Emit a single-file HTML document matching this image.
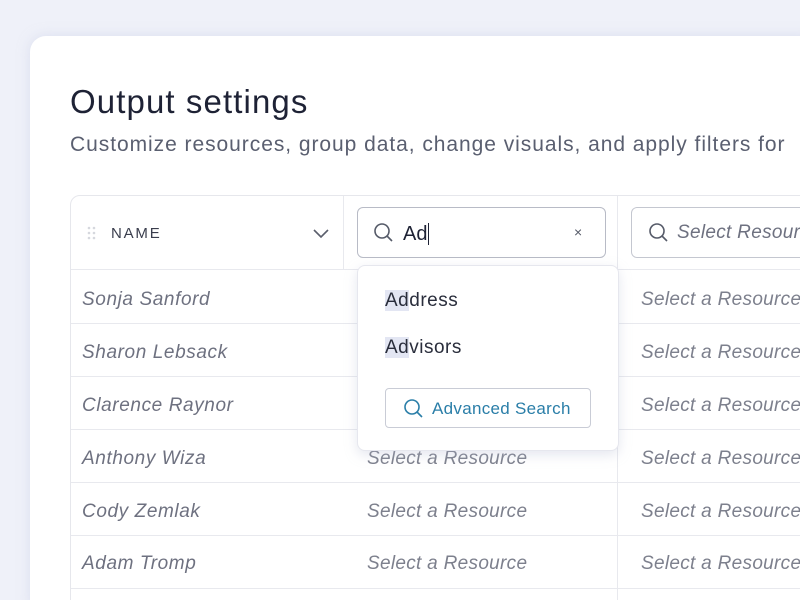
<!DOCTYPE html>
<html><head><meta charset="utf-8"><style>
*{margin:0;padding:0;box-sizing:border-box}
html,body{width:800px;height:600px;overflow:hidden}
body{background:#eff1f9;font-family:"Liberation Sans",sans-serif;position:relative}
.card{position:absolute;left:30px;top:36px;width:790px;height:580px;background:#fff;border-radius:16px;box-shadow:0 0 12px rgba(200,205,230,.5)}
.abs{position:absolute}
h1{position:absolute;left:70px;top:83px;font-size:33px;font-weight:400;color:#1e2235;letter-spacing:1.1px}
.sub{position:absolute;left:70px;top:133px;font-size:21px;color:#5a5f70;white-space:nowrap;letter-spacing:.95px}
.tbl{position:absolute;left:70px;top:195px;width:740px;height:420px;border:1px solid #e6e7ec;border-radius:10px 0 0 0}
.hl{position:absolute;height:1px;background:#e8e9ee}
.vl{position:absolute;width:1px;background:#e8e9ee}
.name{position:absolute;left:82px;font-size:19px;font-style:italic;color:#6e7180;letter-spacing:.6px}
.sel{position:absolute;font-size:19px;font-style:italic;color:#7d808d;white-space:nowrap;letter-spacing:.3px}
</style></head><body>
<div class="card"></div>
<h1>Output settings</h1>
<div class="sub">Customize resources, group data, change visuals, and apply filters for</div>
<div class="tbl"></div>
<div class="vl" style="left:343px;top:196px;height:73px"></div>
<div class="vl" style="left:617px;top:196px;height:410px"></div>
<div class="hl" style="left:71px;top:269px;width:729px"></div>
<div class="hl" style="left:71px;top:323px;width:729px"></div>
<div class="hl" style="left:71px;top:376px;width:729px"></div>
<div class="hl" style="left:71px;top:429px;width:729px"></div>
<div class="hl" style="left:71px;top:482px;width:729px"></div>
<div class="hl" style="left:71px;top:535px;width:729px"></div>
<div class="hl" style="left:71px;top:588px;width:729px"></div>
<svg class="abs" style="left:87px;top:226px" width="10" height="14"><g fill="#d6d8de"><circle cx="2" cy="2" r="1.3"/><circle cx="7" cy="2" r="1.3"/><circle cx="2" cy="7" r="1.3"/><circle cx="7" cy="7" r="1.3"/><circle cx="2" cy="12" r="1.3"/><circle cx="7" cy="12" r="1.3"/></g></svg>
<div class="abs" style="left:111px;top:225px;font-size:15px;letter-spacing:1.8px;color:#3a3e4d">NAME</div>
<svg class="abs" style="left:312px;top:227px" width="18" height="12"><path d="M2 3l7 7 7-7" fill="none" stroke="#5a5e6c" stroke-width="1.6"/></svg>
<div class="abs" style="left:357px;top:207px;width:249px;height:51px;border:1.5px solid #b8bbc6;border-radius:6px"></div>
<svg class="abs" style="left:373px;top:222px" width="22" height="22"><circle cx="9" cy="9" r="7" fill="none" stroke="#555a68" stroke-width="1.6"/><path d="M14 14l5 5" stroke="#555a68" stroke-width="1.6"/></svg>
<div class="abs" style="left:403px;top:223px;font-size:20px;color:#1e2235">Ad<span style="border-left:1.5px solid #1e2235;margin-left:1px"></span></div>
<div class="abs" style="left:574px;top:224px;font-size:14px;color:#555a68">×</div>
<div class="abs" style="left:631px;top:207px;width:200px;height:51px;border:1.5px solid #c4c7d0;border-radius:6px"></div>
<svg class="abs" style="left:648px;top:222px" width="22" height="22"><circle cx="9" cy="9" r="7" fill="none" stroke="#555a68" stroke-width="1.6"/><path d="M14 14l5 5" stroke="#555a68" stroke-width="1.6"/></svg>
<div class="sel" style="left:677px;top:222px;color:#6e7180">Select Resource</div>
<div class="name" style="top:289px">Sonja Sanford</div>
<div class="name" style="top:342px">Sharon Lebsack</div>
<div class="name" style="top:395px">Clarence Raynor</div>
<div class="name" style="top:448px">Anthony Wiza</div>
<div class="name" style="top:501px">Cody Zemlak</div>
<div class="name" style="top:553px">Adam Tromp</div>
<div class="sel" style="left:367px;top:448px">Select a Resource</div>
<div class="sel" style="left:367px;top:501px">Select a Resource</div>
<div class="sel" style="left:367px;top:553px">Select a Resource</div>
<div class="sel" style="left:641px;top:289px">Select a Resource</div>
<div class="sel" style="left:641px;top:342px">Select a Resource</div>
<div class="sel" style="left:641px;top:395px">Select a Resource</div>
<div class="sel" style="left:641px;top:448px">Select a Resource</div>
<div class="sel" style="left:641px;top:501px">Select a Resource</div>
<div class="sel" style="left:641px;top:553px">Select a Resource</div>
<div class="abs" style="left:357px;top:265px;width:262px;height:186px;background:#fff;border:1px solid #e6e7ee;border-radius:8px;box-shadow:0 4px 12px rgba(180,185,210,.35)"></div>
<div class="abs" style="left:385px;top:290px;font-size:19px;color:#2a2e3c;letter-spacing:.5px"><span style="background:#e3e6f3">Ad</span>dress</div>
<div class="abs" style="left:385px;top:337px;font-size:19px;color:#2a2e3c;letter-spacing:.5px"><span style="background:#e3e6f3">Ad</span>visors</div>
<div class="abs" style="left:385px;top:388px;width:206px;height:40px;border:1.5px solid #c9ccd6;border-radius:4px"></div>
<svg class="abs" style="left:403px;top:398px" width="22" height="22"><circle cx="9" cy="9" r="7" fill="none" stroke="#2a7ea8" stroke-width="1.6"/><path d="M14 14l5 5" stroke="#2a7ea8" stroke-width="1.6"/></svg>
<div class="abs" style="left:432px;top:399px;font-size:17px;color:#2a7ea8;letter-spacing:.3px">Advanced Search</div>
</body></html>
